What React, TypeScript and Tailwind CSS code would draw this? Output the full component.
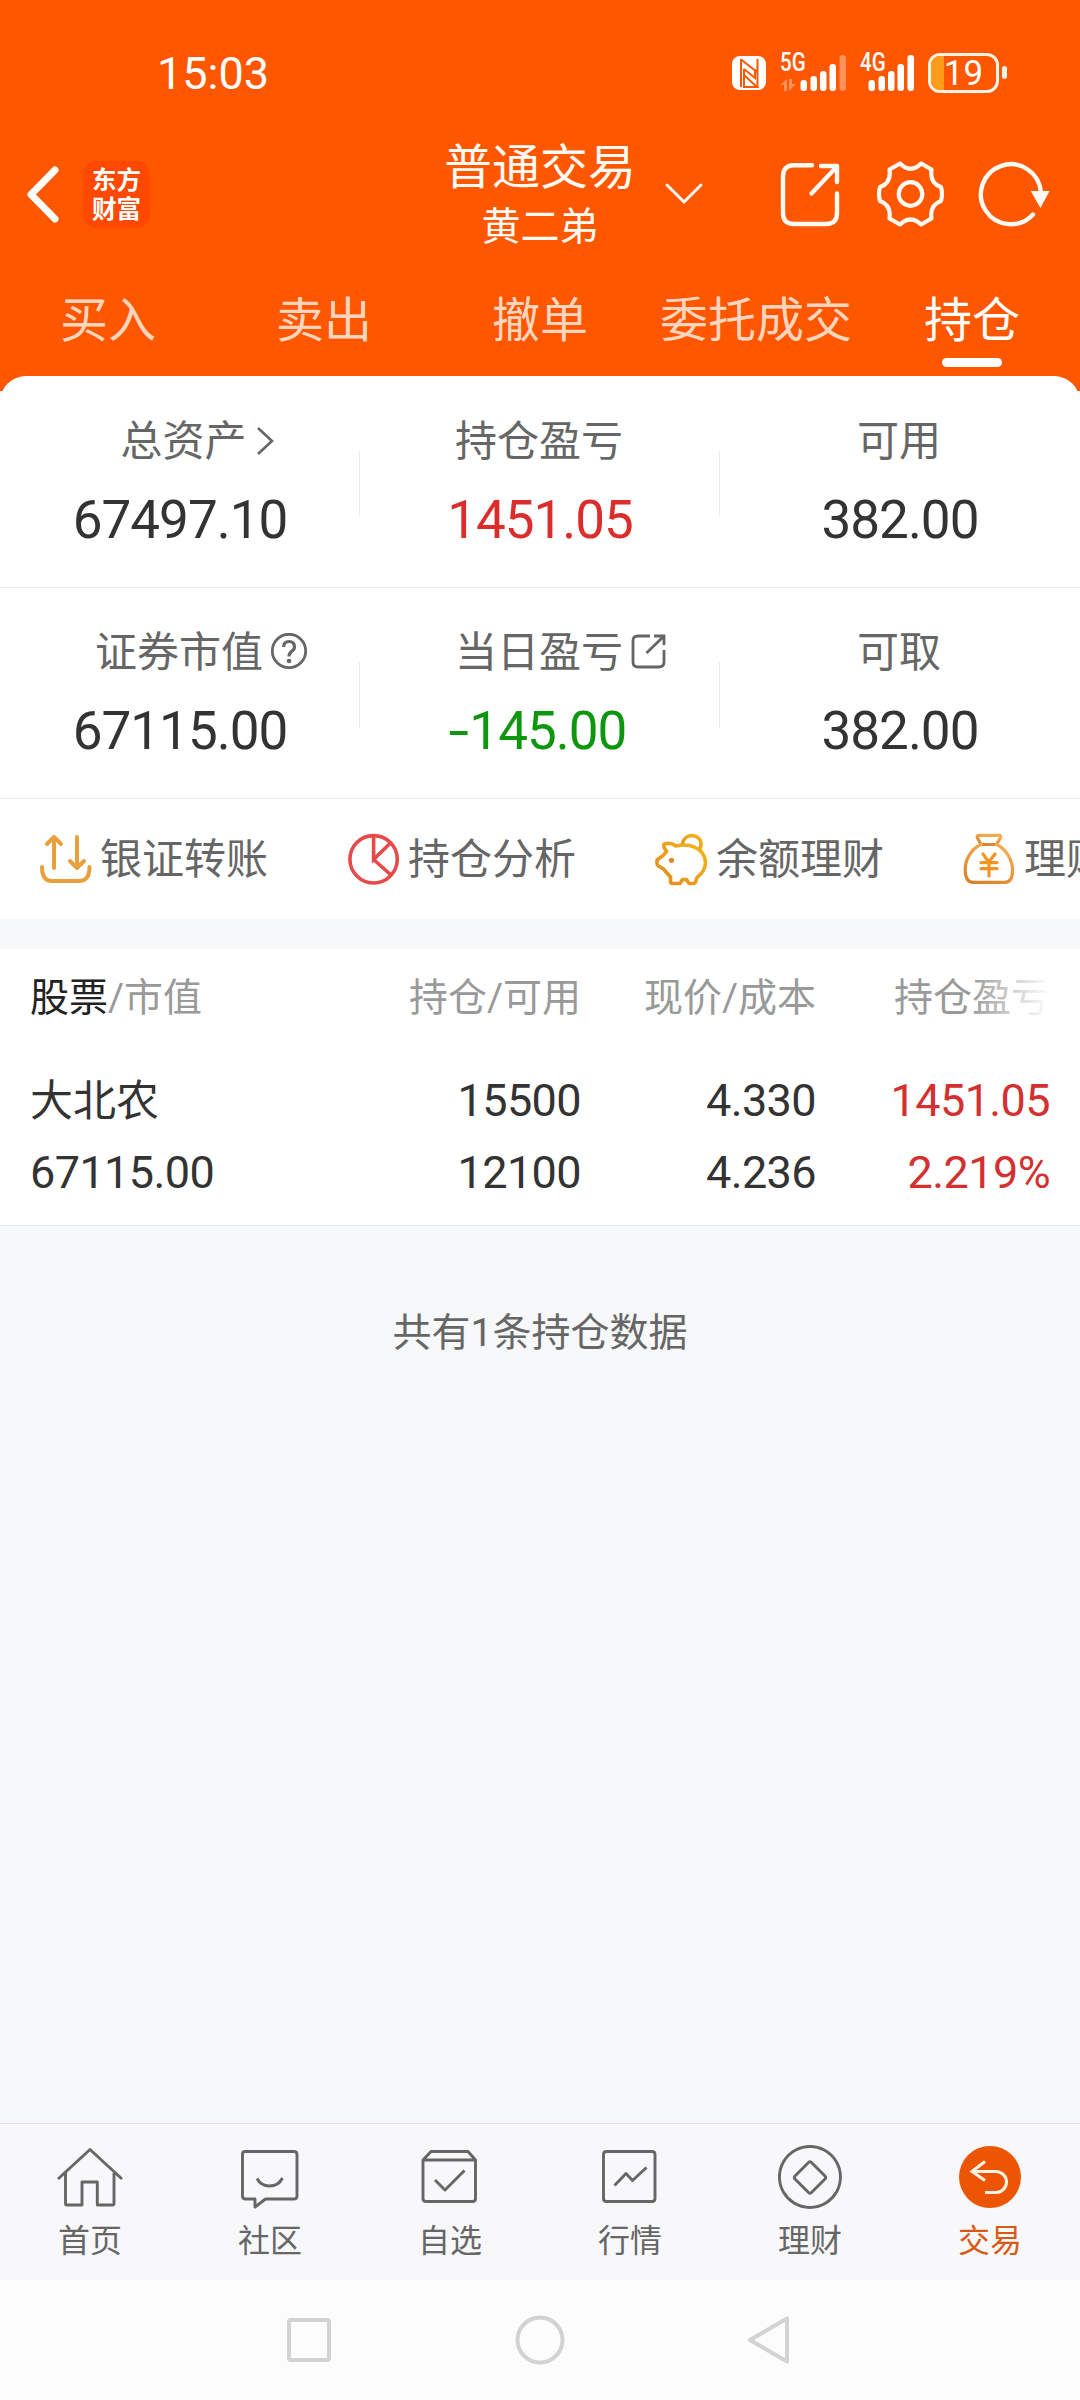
import React from 'react';

const tabs = ['买入', '卖出', '撤单', '委托成交', '持仓'];

const summary = [
  [
    { label: '总资产', value: '67497.10', color: 'text-[#333333]', icon: 'chevron' },
    { label: '持仓盈亏', value: '1451.05', color: 'text-[#dd2c2c]', icon: '' },
    { label: '可用', value: '382.00', color: 'text-[#333333]', icon: '' },
  ],
  [
    { label: '证券市值', value: '67115.00', color: 'text-[#333333]', icon: 'help' },
    { label: '当日盈亏', value: '-145.00', color: 'text-[#0f960f]', icon: 'share' },
    { label: '可取', value: '382.00', color: 'text-[#333333]', icon: '' },
  ],
];

const SignalBars: React.FC<{ label: string; weak?: boolean }> = ({ label, weak }) => (
  <div className={`relative h-[40px] ${weak ? 'w-[68px]' : 'w-[56px]'}`}>
    <span className="absolute left-0 top-0 text-[25px] leading-[22px] font-medium origin-left scale-x-[0.82]">{label}</span>
    <svg className="absolute top-0 right-0" width="48" height="40" fill="currentColor">
      <rect x="0.500" y="28" width="6.5" height="11" rx="3" />
      <rect x="10.500" y="24" width="6.5" height="15" rx="3" />
      <rect x="20" y="19" width="6.5" height="20" rx="3" />
      <rect x="29.500" y="12" width="6.5" height="27" rx="3" />
      <rect x="39.500" y="3" width="6.5" height="36" rx="3" opacity={weak ? 0.35 : 1} />
    </svg>
    {weak && (
      <svg className="absolute left-0 top-[27px]" width="17" height="12" fill="currentColor" opacity="0.35">
        <path d="M0 6l7-6v12H4V6zM9 0h3v5h4l-7 7z" />
      </svg>
    )}
  </div>
);

const StatusBar: React.FC = () => (
  <div className="flex items-start h-[134px] pt-[52px] text-white">
    <span className="ml-[157px] text-[45px] leading-[44px] w-[119px]">15:03</span>
    <div className="flex ml-[456px] h-[40px]">
      <svg width="34" height="34" viewBox="0 0 34 34" className="mt-[4px]">
        <rect width="34" height="34" rx="8" fill="#fff" />
        <path d="M9 3V31M25.500 3V31M9 3.500L25 16M12 13L23 22V13M12 13V31L25 31L12 19" fill="none" stroke="#ff5600" strokeWidth="2" />
      </svg>
      <div className="ml-[14px]"><SignalBars label="5G" weak /></div>
      <div className="ml-[12px]"><SignalBars label="4G" /></div>
      <div className="flex items-center ml-[12px] mt-[1px]">
        <div className="relative w-[71px] h-[40px] rounded-[12px] border-[3px] border-[#fff3e6] overflow-hidden">
          <div className="h-full w-[13px] bg-[#ff9c1a]" />
          <span className="absolute inset-0 text-center text-[35px] leading-[35px]">19</span>
        </div>
        <div className="w-[5px] h-[13px] ml-[3px] rounded-full bg-[#fff3e6]" />
      </div>
    </div>
  </div>
);

const TitleBar: React.FC = () => (
  <div className="flex items-center h-[120px] text-[#fffaf3]">
    <svg width="60" height="70" fill="none" stroke="#fff" strokeWidth="7" strokeLinecap="round" strokeLinejoin="round">
      <path d="M55 11L31 35.5L55 60" />
    </svg>
    <div className="w-[67px] h-[67px] ml-[23px] pt-[1px] rounded-[14px] bg-[#ff4800] flex flex-col items-center justify-center text-[24.500px] leading-[29px] font-bold text-white">
      <span>东方</span>
      <span>财富</span>
    </div>
    <div className="w-[380px] ml-[200px] pt-[7px] flex flex-col items-center">
      <span className="text-[48px] leading-[58px]">普通交易</span>
      <span className="text-[39px] leading-[60px]">黄二弟</span>
    </div>
    <svg className="ml-[-66px]" width="40" height="24" fill="none" stroke="currentColor" strokeWidth="3" strokeLinecap="round" strokeLinejoin="round">
      <path d="M3 3L20 20L37 3" />
    </svg>
    <svg className="ml-[71px]" width="70" height="70" fill="none" stroke="currentColor" strokeWidth="4.4" strokeLinecap="round" strokeLinejoin="round">
      <path d="M37 6.3H19Q8 6.3 8 17.3V54Q8 65 19 65H51Q62 65 62 54V34.5" />
      <path d="M46 7H62V23M61 8.5L36.5 34.5" />
    </svg>
    <svg className="ml-[30px]" width="70" height="70" fill="none" stroke="currentColor" strokeWidth="4.2" strokeLinejoin="round">
      <path d="M25 4.500Q35.500 15 46.200 4.500L56.500 10.500Q54.500 24 66 28Q68 35 66 42Q54.500 46 56.500 59.500L46.200 65.500Q35.500 55.500 25 65.500L14.500 59.500Q16.500 46 5 42Q3 35 5 28Q16.500 24 14.500 10.500Z" />
      <circle cx="35.5" cy="35" r="11.8" />
    </svg>
    <svg className="ml-[30px]" width="78" height="70" fill="none" stroke="currentColor" strokeWidth="4.4" strokeLinecap="round">
      <path d="M65.8 33A30 30 0 1 0 58 55.500" />
      <path d="M55.700 32H74.600L65.400 49Z" fill="currentColor" stroke="none" />
    </svg>
  </div>
);

const Tabs: React.FC = () => (
  <div className="grid grid-cols-5 h-[137px] text-[48px]">
    {tabs.map((tab) => (
      <div key={tab} className="flex flex-col items-center pt-[39px]">
        <span className={`leading-[56px] whitespace-nowrap ${tab === '持仓' ? 'text-white' : 'text-[#ffd5bd]'}`}>{tab}</span>
        {tab === '持仓' && <div className="w-[60px] h-[9px] mt-[9px] rounded-full bg-white" />}
      </div>
    ))}
  </div>
);

const LabelIcon: React.FC<{ name: string }> = ({ name }) => {
  if (name === 'chevron') {
    return (
      <svg className="mr-[-34px]" width="34" height="40" fill="none" stroke="#666" strokeWidth="2.6">
        <path d="M11 6L25 19L11 32" />
      </svg>
    );
  }
  if (name === 'help') {
    return (
      <svg className="ml-[6px] mr-[-46px]" width="40" height="40" fill="none" stroke="#666" strokeWidth="2.8">
        <circle cx="20" cy="18" r="16.700" />
        <path d="M14.500 14Q15 8.500 20 8.500Q25.500 8.500 25.500 14Q25.500 16.500 22.500 18.500Q20 20.500 20 23.500" strokeWidth="3.200" />
        <circle cx="20" cy="28" r="2.300" fill="#666" stroke="none" />
      </svg>
    );
  }
  return (
    <svg className="ml-[5px] mr-[-45px]" width="40" height="40" fill="none" stroke="#666" strokeWidth="2.8">
      <path d="M22 3H10Q5 3 5 8V29Q5 34 10 34H31Q36 34 36 29V17" />
      <path d="M26 3H36V12M36 3L18.500 20" />
    </svg>
  );
};

const Summary: React.FC = () => (
  <div className="bg-white rounded-t-[26px] mt-[-15px]">
    {summary.map((row, i) => (
      <div key={i} className={`grid grid-cols-3 border-b border-[#ebebeb] ${i === 0 ? 'h-[212px]' : 'h-[211px]'}`}>
        {row.map((cell, j) => (
          <div key={cell.label} className={`relative flex flex-col items-center ${i === 0 ? 'pt-[38px]' : 'pt-[37px]'}`}>
            <div className={`flex items-center h-[56px] text-[42px] leading-[56px] text-[#666666] ${cell.icon === 'chevron' ? 'pl-[7px]' : 'pr-[2px]'}`}>
              {cell.label}
              {cell.icon && <LabelIcon name={cell.icon} />}
            </div>
            <div className={`mt-[20px] text-[53px] leading-[60px] tracking-[-1px] ${cell.color}`}>
              {cell.value.startsWith('-') && <span className="inline-block mr-[2px] origin-right scale-x-[1.4]">-</span>}
              {cell.value.replace('-', '')}
            </div>
            {j < 2 && <div className="absolute right-0 top-[74px] w-px h-[66px] bg-[#ececec]" />}
          </div>
        ))}
      </div>
    ))}
  </div>
);

const Shortcuts: React.FC = () => (
  <div className="flex h-[120px] bg-white overflow-hidden pl-[38px] text-[42px] text-[#666666]">
    <div className="flex items-center shrink-0 w-[308px]">
      <svg width="56" height="56" fill="none" stroke="#e9a03c" strokeWidth="4" strokeLinecap="round" strokeLinejoin="round">
        <path d="M16 37V6M9 13L16 6L23 13M39 6V37M32 30L39 37L46 30M4 36Q4 50 14 50H41Q51.500 50 51.500 36" />
      </svg>
      <span className="ml-[6px] whitespace-nowrap">银证转账</span>
    </div>
    <div className="flex items-center shrink-0 w-[308px]">
      <svg width="56" height="56" fill="none" stroke="#e64a4a" strokeWidth="3.600">
        <circle cx="27.600" cy="28.300" r="23.700" />
        <path d="M27.600 5V28.500L44.500 12M27.600 28.500L45 44" />
      </svg>
      <span className="ml-[6px] whitespace-nowrap">持仓分析</span>
    </div>
    <div className="flex items-center shrink-0 w-[308px]">
      <svg width="56" height="56" fill="none" stroke="url(#gold)" strokeWidth="3.600" strokeLinejoin="round">
        <defs>
          <linearGradient id="gold" x1="0" y1="1" x2="1" y2="0">
            <stop offset="0" stopColor="#e28a1c" />
            <stop offset="1" stopColor="#f0b81a" />
          </linearGradient>
        </defs>
        <path d="M28 14C29 8 33 4.500 38 4.500C44 5 47.500 9 47 14Q47 17 44.500 19" />
        <path d="M10 13Q17 11 22 15C34 12 51 16 51.500 31.500Q51.500 40 43 46.500L41.500 51Q41 52.500 39 52.500H36Q34.500 52.500 34 51L32.500 48.500H28.500L27 51Q26.500 52.500 25 52.500H19Q16.500 52.500 16.500 50V46L9.500 38L4.500 35Q3 34 3 32V29L8.500 25L12.700 20.500Q9 16 10 13Z" />
        <circle cx="17.500" cy="29.300" r="2.600" fill="#e28a1c" stroke="none" />
      </svg>
      <span className="ml-[6px] whitespace-nowrap">余额理财</span>
    </div>
    <div className="flex items-center shrink-0 w-[308px]">
      <svg width="56" height="56" fill="none" stroke="url(#bag)" strokeWidth="3.200" strokeLinecap="round" strokeLinejoin="round">
        <defs>
          <linearGradient id="bag" x1="0" y1="1" x2="0.500" y2="0">
            <stop offset="0" stopColor="#dd7d25" />
            <stop offset="1" stopColor="#f0ad50" />
          </linearGradient>
        </defs>
        <path d="M17 4.300H37Q39.500 4.300 38.500 6.500L34.600 13.500H19L15.300 6.500Q14.500 4.300 17 4.300Z" />
        <path d="M19 13.500C9 18 3 29 3.200 39Q3.500 51.300 11 51.300H43Q50.500 51.300 50.600 39C50.500 29 44 18 34.600 13.500" />
        <path d="M21 23L26.800 31L33 23M19 31.700H35M19 37.700H35M27 31V45" stroke="#f29423" />
      </svg>
      <span className="ml-[6px] whitespace-nowrap">理财</span>
    </div>
  </div>
);

const Positions: React.FC = () => (
  <div className="bg-white mt-[30px] h-[277px] border-b border-[#e9e9eb] px-[30px]">
    <div className="grid grid-cols-[250px_301px_235px_234px] h-[98px] items-center text-right text-[39px] text-[#999999]">
      <div className="text-left"><span className="text-[#222222]">股票</span>/市值</div>
      <div>持仓/可用</div>
      <div>现价/成本</div>
      <div className="relative">
        持仓盈亏
        <div className="absolute right-0 inset-y-0 w-[80px] bg-gradient-to-r from-white/0 to-white" />
      </div>
    </div>
    <div className="grid grid-cols-[250px_301px_235px_234px] mt-[18px] text-right text-[45px] leading-[72px] tracking-[-0.600px] text-[#333333]">
      <div className="text-left text-[43px] tracking-normal">大北农</div>
      <div>15500</div>
      <div>4.330</div>
      <div className="text-[#d43030]">1451.05</div>
      <div className="text-left">67115.00</div>
      <div>12100</div>
      <div>4.236</div>
      <div className="text-[#d43030]">2.219%</div>
    </div>
  </div>
);

const navItems = [
  { label: '首页', d: 'M3 37L35 7.500L67 37M10.500 31V61.500Q10.500 63 12 63H27V40H42.300V63H57.500Q59 63 59 61.500V31' },
  { label: '社区', d: 'M10 9.500H59Q62 9.500 62 12.500V54Q62 57 59 57H30.500L20 65V57H10.500Q7.500 57 7.500 54V12.500Q7.500 9.500 10 9.500ZM22 36.500Q26 44 34.500 44Q43.500 44 47.500 36' },
  { label: '自选', d: 'M8 18L16 9.500H53L60.500 18V56.500Q60.500 59.500 57.500 59.500H11Q8 59.500 8 56.500V18H60.500M20 38L30 48L49.500 28.500' },
  { label: '行情', d: 'M11.500 9.500H57Q60 9.500 60 12.500V56.500Q60 59.500 57 59.500H11.500Q8.500 59.500 8.500 56.500V12.500Q8.500 9.500 11.500 9.500ZM19.500 43.500L31 31.500L37.500 38.500L51.500 25.500' },
  { label: '理财', d: 'M35 4.500A30.500 30.500 0 1 1 34.900 4.500ZM33.500 20.500Q35 19 36.500 20.500L50 34Q51.300 35.500 50 37L36.500 50.500Q35 52 33.500 50.500L20 37Q18.700 35.500 20 34Z' },
];

const BottomNav: React.FC = () => (
  <div className="grid grid-cols-6 h-[157px] bg-[#f8f8fb] border-t border-[#e3e4e6] text-[32px] leading-[44px] text-[#666666]">
    {navItems.map((item) => (
      <div key={item.label} className="flex flex-col items-center pt-[18px]">
        <svg width="70" height="70" fill="none" stroke="#666" strokeWidth="2.900" strokeLinejoin="round">
          <path d={item.d} />
        </svg>
        <span className="mt-[7px]">{item.label}</span>
      </div>
    ))}
    <div className="flex flex-col items-center pt-[18px] text-[#d95a17]">
      <svg width="70" height="70" fill="none" stroke="#fff3e6" strokeWidth="3">
        <circle cx="35" cy="35" r="31" fill="#eb5503" stroke="none" />
        <path d="M30 19.500L17 29.500L30 38.500M17 29.500H41A10.500 10.500 0 0 1 41 50.500H30" />
      </svg>
      <span className="mt-[7px]">交易</span>
    </div>
  </div>
);

const SystemNav: React.FC = () => (
  <div className="flex items-center justify-center gap-[180px] h-[120px] bg-[#fcfcfc]">
    <svg width="51" height="50" fill="none" stroke="#d2d2d2" strokeWidth="4">
      <rect x="5" y="5" width="40" height="40" rx="2" />
    </svg>
    <svg width="50" height="50" fill="none" stroke="#d2d2d2" strokeWidth="4">
      <circle cx="25" cy="25" r="22.500" />
    </svg>
    <svg width="51" height="50" fill="none" stroke="#d2d2d2" strokeWidth="4" strokeLinejoin="round">
      <path d="M42 3.500V46.500L5 25Z" />
    </svg>
  </div>
);

const App: React.FC = () => {
  return (
    <div className="flex flex-col w-[1080px] h-[2400px] overflow-hidden bg-[#f7f8fa] font-['Roboto','Noto_Sans_CJK_SC',sans-serif]">
      <div className="bg-[#ff5600] shrink-0">
        <StatusBar />
        <TitleBar />
        <Tabs />
      </div>
      <Summary />
      <Shortcuts />
      <Positions />
      <div className="flex-1 pt-[79px] text-center text-[39px] leading-[56px] text-[#666666]">共有1条持仓数据</div>
      <BottomNav />
      <SystemNav />
    </div>
  );
};

export default App;
